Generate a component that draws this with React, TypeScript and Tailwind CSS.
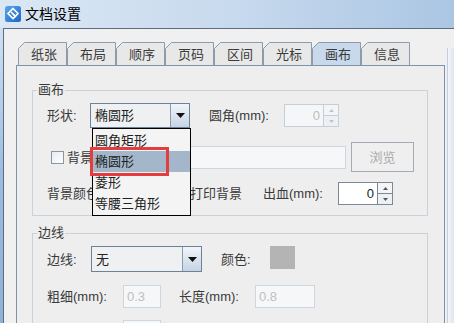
import React from "react";

function Tab({ label, selected }: { label: string; selected?: boolean }) {
  return (
    <div className="relative w-[49px] h-[23px] flex items-center justify-center">
      <svg className="absolute inset-0" width="49" height="23">
        <path
          d="M0.5 23 V6.5 L6.5 0.5 H48.5 V23"
          fill={selected ? "#c8d9eb" : "#e8e8e8"}
          stroke="#8d9bab"
        />
      </svg>
      <span className="relative pl-[3px] pt-[2px] text-[#3a3a3a]">{label}</span>
    </div>
  );
}

function UpArrow({ color }: { color: string }) {
  return (
    <svg width="5" height="3">
      <path d="M0 3H5L2.5 0Z" fill={color} />
    </svg>
  );
}
function DownArrow({ color }: { color: string }) {
  return (
    <svg width="5" height="3">
      <path d="M0 0H5L2.5 3Z" fill={color} />
    </svg>
  );
}

function Spinner({ value, disabled }: { value: string; disabled?: boolean }) {
  return (
    <div
      className={`flex h-[23px] w-[55px] border ${
        disabled ? "border-[#c6cfd9] bg-[#f5f6f7]" : "border-[#7b8896] bg-white"
      }`}
    >
      <div
        className={`flex-1 flex items-center justify-end pr-[3px] ${
          disabled ? "text-[#bdbdbd]" : "text-[#222]"
        }`}
      >
        {value}
      </div>
      <div
        className={`w-[15px] flex flex-col border-l ${
          disabled ? "border-[#c6cfd9]" : "border-[#7b8896]"
        }`}
      >
        <div
          className={`flex-1 flex items-center justify-center border-b bg-[#f3f5f7] ${
            disabled ? "border-[#c6cfd9]" : "border-[#7b8896]"
          }`}
        >
          <UpArrow color={disabled ? "#c4c4c4" : "#555"} />
        </div>
        <div className="flex-1 flex items-center justify-center bg-[#eef1f4]">
          <DownArrow color={disabled ? "#c4c4c4" : "#555"} />
        </div>
      </div>
    </div>
  );
}

function Combo({ value, className }: { value: string; className: string }) {
  return (
    <div className={`flex border border-[#6f8196] bg-[#eef0f2] ${className}`}>
      <div className="flex-1 flex items-center pl-[4px] text-[#222]">{value}</div>
      <div className="w-[19px] border-l border-[#8b9bb0] bg-gradient-to-b from-[#f1f5f9] to-[#c6d4e4] flex items-center justify-center">
        <svg width="9" height="5">
          <path d="M0 0H9L4.5 5Z" fill="#111" />
        </svg>
      </div>
    </div>
  );
}

function Checkbox() {
  return (
    <div className="w-[13px] h-[13px] border border-[#8a96a3] bg-gradient-to-br from-[#e8ebee] to-white" />
  );
}

function Field({ value, className }: { value: string; className: string }) {
  return (
    <div
      className={`h-[23px] border border-[#cdd5de] bg-[#f6f7f8] flex items-center pl-[3px] text-[#c0c0c0] ${className}`}
    >
      {value}
    </div>
  );
}

function Group({
  title,
  children,
  className,
}: {
  title: string;
  children: React.ReactNode;
  className?: string;
}) {
  return (
    <div className={`relative w-[396px] border border-[#c9d1da] ${className ?? ""}`}>
      <span className="absolute left-[4px] top-[-9px] px-[1px] bg-[#eeeeee] leading-[16px] text-[#3a3a3a]">
        {title}
      </span>
      {children}
    </div>
  );
}

export default function App() {
  return (
    <div className="relative w-[454px] h-[323px] overflow-hidden font-['Liberation_Sans','Noto_Sans_CJK_SC',sans-serif] text-[13px] leading-none bg-gradient-to-r from-[#dbe7f4] via-[#c8daee] to-[#abc6e3]">
      {/* title bar */}
      <div className="h-[28px] flex items-center pl-[5px]">
        <svg width="16" height="16" viewBox="0 0 16 16">
          <defs>
            <linearGradient id="ig" x1="0" y1="0" x2="1" y2="1">
              <stop offset="0" stopColor="#5aa6ee" />
              <stop offset="1" stopColor="#1d67c4" />
            </linearGradient>
          </defs>
          <rect x="0" y="0" width="16" height="16" rx="2.5" fill="url(#ig)" />
          <path d="M8 2.5 L13 7.5 L8 12.5 L3 7.5 Z" fill="none" stroke="#fff" strokeWidth="1.6" />
          <path d="M6 6 L9.5 9.5" stroke="#fff" strokeWidth="1.6" />
          <path d="M8 8 L11 11" stroke="#fff" strokeWidth="1.4" />
        </svg>
        <span className="ml-[4px] text-[14px] text-black">文档设置</span>
      </div>

      {/* body */}
      <div className="flex h-[295px]">
        <div className="w-[4px] bg-gradient-to-b from-[#cfe0f2] via-[#9dbbe0] to-[#8fb0d8]" />
        <div className="flex-1 flex border-l border-t border-[#5d6d80] bg-[#f0f0f0]">
          <div className="w-[441px] pl-[12px] pt-[13px] flex flex-col">
            <div className="flex ml-[2px]">
              <Tab label="纸张" />
              <Tab label="布局" />
              <Tab label="顺序" />
              <Tab label="页码" />
              <Tab label="区间" />
              <Tab label="光标" />
              <Tab label="画布" selected />
              <Tab label="信息" />
            </div>
            <div className="flex-1 border border-[#7d92ab] bg-[#eeeeee] pl-[15px] pt-[24px]">
              <Group title="画布">
                <div className="pl-[14px] pt-[12px]">
                  {/* row 1 */}
                  <div className="flex items-center h-[25px]">
                    <span className="w-[43px] text-[#3a3a3a]">形状:</span>
                    <Combo value="椭圆形" className="w-[100px] h-[25px]" />
                    <span className="ml-[19px] w-[75px] text-[#3a3a3a]">圆角(mm):</span>
                    <Spinner value="0" disabled />
                  </div>
                  {/* row 2 */}
                  <div className="flex items-center h-[30px] mt-[14px]">
                    <div className="ml-[4px]">
                      <Checkbox />
                    </div>
                    <span className="ml-[3px] text-[#3a3a3a]">背景图片</span>
                    <Field value="" className="ml-[40px] w-[187px]" />
                    <div className="ml-[5px] w-[63px] h-[30px] border border-[#a3acb6] bg-[#efefef] flex items-center justify-center text-[#aaaaaa]">
                      浏览
                    </div>
                  </div>
                  {/* row 3 */}
                  <div className="flex items-center h-[23px] mt-[10px] mb-[10px]">
                    <span className="w-[64px] text-[#3a3a3a]">背景颜色:</span>
                    <div className="ml-[4px] w-[25px] h-[21px] bg-[#b4b4b4]" />
                    <div className="ml-[35px]">
                      <Checkbox />
                    </div>
                    <span className="ml-[2px] text-[#3a3a3a]">打印背景</span>
                    <span className="ml-[21px] w-[75px] text-[#3a3a3a]">出血(mm):</span>
                    <Spinner value="0" />
                  </div>
                </div>
              </Group>

              <Group title="边线" className="mt-[17px] h-[200px]">
                <div className="pl-[14px] pt-[12px]">
                  <div className="flex items-center h-[26px]">
                    <span className="w-[44px] text-[#3a3a3a]">边线:</span>
                    <Combo value="无" className="w-[111px] h-[26px]" />
                    <span className="ml-[19px] w-[49px] text-[#3a3a3a]">颜色:</span>
                    <div className="w-[25px] h-[23px] bg-[#b4b4b4] -mt-[3px]" />
                  </div>
                  <div className="flex items-center h-[23px] mt-[13px]">
                    <span className="w-[76px] text-[#3a3a3a]">粗细(mm):</span>
                    <Field value="0.3" className="w-[38px]" />
                    <span className="ml-[18px] w-[76px] text-[#3a3a3a]">长度(mm):</span>
                    <Field value="0.8" className="w-[60px]" />
                  </div>
                  <div className="flex items-center h-[23px] mt-[12px]">
                    <span className="w-[76px] text-[#3a3a3a]"></span>
                    <Field value="" className="w-[38px]" />
                  </div>
                </div>
              </Group>
            </div>
          </div>
          <div className="ml-[2px] mt-[19px] w-[7px] border-l border-[#c3cfdc] bg-gradient-to-r from-[#f3f6f9] to-[#dde5ee]" />
        </div>
      </div>

      {/* dropdown popup */}
      <div className="absolute left-[92px] top-[128px] w-[99px] h-[88px] border border-black bg-[#f4f4f4] pt-[1px]">
        <div className="h-[21px] flex items-center pl-[2px] text-[#222]">圆角矩形</div>
        <div className="h-[21px] flex items-center pl-[2px] text-[#222] bg-[#a3b6ca]">椭圆形</div>
        <div className="h-[21px] flex items-center pl-[2px] text-[#222]">菱形</div>
        <div className="h-[21px] flex items-center pl-[2px] text-[#222]">等腰三角形</div>
      </div>
      {/* red highlight */}
      <div className="absolute left-[90px] top-[147px] w-[79px] h-[29px] border-[3px] border-[#e43d3f]" />
    </div>
  );
}
